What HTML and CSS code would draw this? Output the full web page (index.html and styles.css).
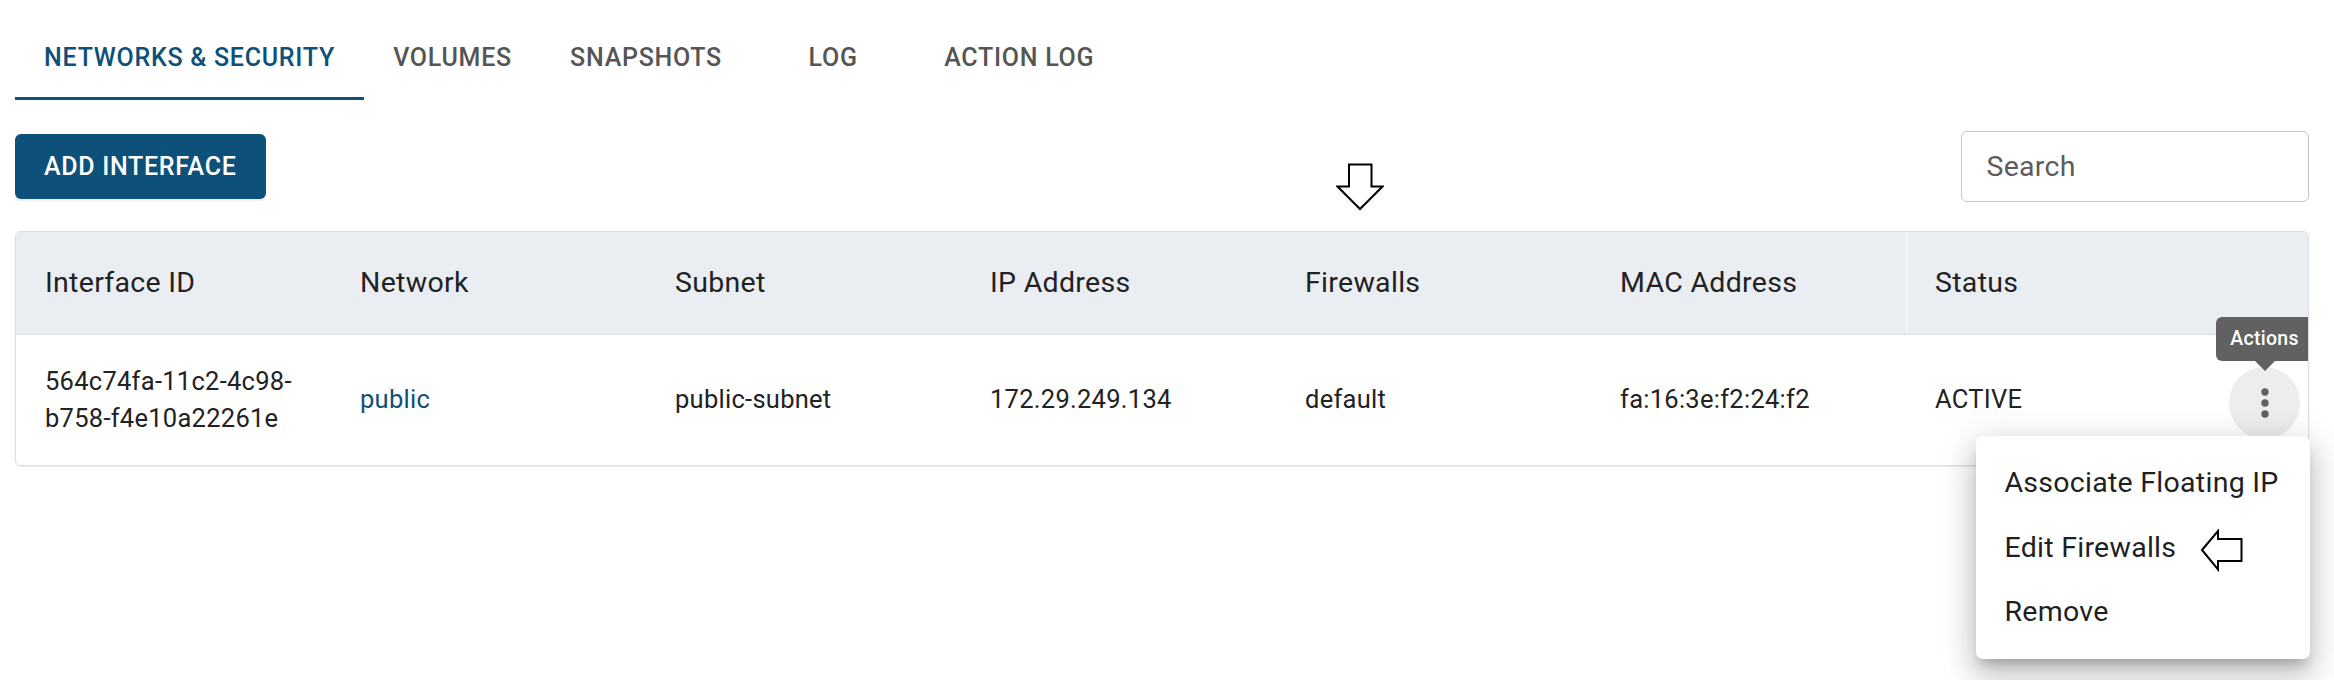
FILE: index.html
```html
<!DOCTYPE html>
<html lang="en">
<head>
<meta charset="utf-8">
<title>Networks &amp; Security</title>
<link rel="stylesheet" href="styles.css">
</head>
<body>
<div class="page">
  <nav class="tabs">
    <a class="tab active">NETWORKS &amp; SECURITY</a>
    <a class="tab">VOLUMES</a>
    <a class="tab">SNAPSHOTS</a>
    <a class="tab">LOG</a>
    <a class="tab">ACTION LOG</a>
  </nav>

  <div class="toolbar">
    <button class="btn">ADD INTERFACE</button>
    <input class="search" type="text" placeholder="Search">
  </div>

  <div class="table">
    <div class="row head">
      <div class="cell">Interface ID</div>
      <div class="cell">Network</div>
      <div class="cell">Subnet</div>
      <div class="cell">IP Address</div>
      <div class="cell">Firewalls</div>
      <div class="cell">MAC Address</div>
      <div class="cell last">Status</div>
    </div>
    <div class="row body">
      <div class="cell">564c74fa-11c2-4c98-b758-f4e10a22261e</div>
      <div class="cell"><a class="link">public</a></div>
      <div class="cell">public-subnet</div>
      <div class="cell">172.29.249.134</div>
      <div class="cell">default</div>
      <div class="cell">fa:16:3e:f2:24:f2</div>
      <div class="cell status">
        <span>ACTIVE</span>
        <span class="more">
          <svg width="44" height="44" viewBox="0 0 24 24"><circle cx="12" cy="6" r="2" fill="#616161"/><circle cx="12" cy="12" r="2" fill="#616161"/><circle cx="12" cy="18" r="2" fill="#616161"/></svg>
          <span class="tooltip">Actions</span>
        </span>
      </div>
    </div>
  </div>

  <svg class="arrow-down" width="48" height="48" viewBox="0 0 48 48"><polygon points="13,1.5 35.5,1.5 35.5,23.5 46.5,23.5 24,46 1.5,23.5 13,23.5" fill="#fff" stroke="#000" stroke-width="2"/></svg>

  <div class="menu">
    <div class="menu-item">Associate Floating IP</div>
    <div class="menu-item">Edit Firewalls</div>
    <div class="menu-item">Remove</div>
  </div>

  <svg class="arrow-left" width="44" height="44" viewBox="0 0 44 44"><polygon points="2,21 18,2 18,10 41.5,10 41.5,32 18,32 18,40.5" fill="#fff" stroke="#000" stroke-width="2"/></svg>
</div>
</body>
</html>
```

FILE: styles.css
```css
* { box-sizing: border-box; }

html, body {
  margin: 0;
  background: #fff;
  font-family: Roboto, "Noto Sans", "Liberation Sans", sans-serif;
  color: rgba(0, 0, 0, 0.87);
}

.page {
  position: relative;
  width: 2334px;
  height: 680px;
  padding: 15px 25.5px 0 15px;
  overflow: hidden;
}

/* Tabs */
.tabs {
  display: flex;
  height: 85px;
}

.tab {
  position: relative;
  display: flex;
  align-items: center;
  justify-content: center;
  min-width: 164px;
  padding: 0 29.1px;
  font-size: 25px;
  font-weight: 500;
  letter-spacing: 0.73px;
  color: #555;
  text-decoration: none;
}

.tab.active {
  color: #0d5079;
}

.tab.active::after {
  content: "";
  position: absolute;
  left: 0;
  right: 0;
  bottom: 0;
  height: 3.5px;
  background: #0d5079;
}

/* Toolbar */
.toolbar {
  display: flex;
  justify-content: space-between;
  align-items: center;
  margin-top: 30.5px;
  height: 71px;
}

.btn {
  height: 65px;
  padding: 0 29px;
  border: none;
  border-radius: 6px;
  background: #0d5079;
  color: #fff;
  font-family: inherit;
  font-size: 25px;
  font-weight: 500;
  letter-spacing: 0.7px;
  box-shadow: 0 2px 2px rgba(0,0,0,0.08);
}

.search {
  width: 348px;
  height: 71px;
  padding: 0 25px;
  border: 1px solid #c4c4c4;
  border-radius: 6px;
  font-family: inherit;
  font-size: 28.5px;
  letter-spacing: 0.27px;
  color: #222;
  outline: none;
}

.search::placeholder {
  color: #5c5c5c;
}

/* Table */
.table {
  margin-top: 29.5px;
  border: 1px solid #dedede;
  border-radius: 6px;
  overflow: hidden;
  box-shadow: 0 1px 2px rgba(0,0,0,0.08);
}

.row {
  display: grid;
  grid-template-columns: repeat(6, 315px) 1fr;
}

.row.head {
  background: #eaeef2;
  border-bottom: 1px solid #d9dde1;
}

.head .cell {
  padding: 29px 29px 29.5px;
  font-size: 28.5px;
  line-height: 43px;
  letter-spacing: 0.3px;
  color: #222;
}

.head .cell.last {
  border-left: 1.5px solid #f7f9fa;
  padding-left: 28px;
}

.body .cell {
  display: flex;
  align-items: center;
  padding: 28.5px 29px;
  font-size: 25.5px;
  line-height: 36.7px;
  letter-spacing: 0.27px;
  color: #222;
}

.link {
  color: #0d5079;
  text-decoration: none;
}

.body .cell.status {
  justify-content: space-between;
  padding-right: 7.5px;
  padding-top: 0;
  padding-bottom: 0;
}

.more {
  position: relative;
  display: flex;
  align-items: center;
  justify-content: center;
  width: 71px;
  height: 72px;
  margin-top: 6px;
  border-radius: 50%;
  background: #ededed;
}

.tooltip {
  position: absolute;
  bottom: calc(100% + 6px);
  left: 50%;
  transform: translateX(-50%);
  width: 98px;
  height: 44px;
  display: flex;
  align-items: center;
  justify-content: center;
  background: #616161;
  color: #fff;
  border-radius: 6px;
  font-size: 19.5px;
  font-weight: 500;
  line-height: 1;
}

.tooltip::after {
  content: "";
  position: absolute;
  top: 100%;
  left: 50%;
  margin-left: -10px;
  border-left: 10px solid transparent;
  border-right: 10px solid transparent;
  border-top: 10px solid #616161;
}

/* Annotations and menu overlays */
.arrow-down {
  position: absolute;
  left: 1336px;
  top: 163px;
}

.arrow-left {
  position: absolute;
  left: 2200px;
  top: 529px;
}

.menu {
  position: absolute;
  left: 1976px;
  top: 436px;
  width: 334px;
  padding: 14.5px 0;
  background: #fff;
  border-radius: 7px;
  box-shadow: 0 9px 11px -5px rgba(0,0,0,0.2), 0 18px 28px 2px rgba(0,0,0,0.14), 0 7px 34px 6px rgba(0,0,0,0.12);
}

.menu-item {
  height: 64.5px;
  display: flex;
  align-items: center;
  padding: 0 28.5px;
  font-size: 28.5px;
  letter-spacing: 0.27px;
  color: #1f1f1f;
}
```
